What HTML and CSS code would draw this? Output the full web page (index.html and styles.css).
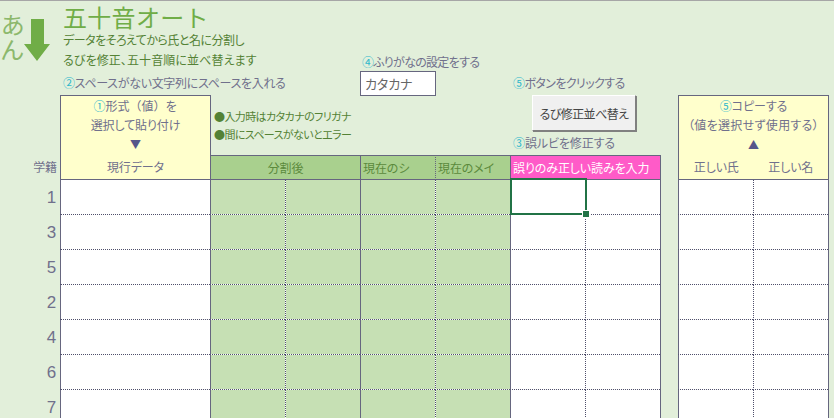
FILE: index.html
```html
<!DOCTYPE html>
<html lang="ja">

<head>
    <meta charset="UTF-8">
    <meta name="viewport" content="width=device-width, initial-scale=1.0">
    <title>五十音オート</title>
    <link rel="stylesheet" href="styles.css">
</head>

<body>
    <!-- 上の説明エリアと見出し -->
    <div class="top">
        <div class="intro">
            <div class="logo">
                <div class="kana">あ<br>ん</div>
                <svg class="arrow" width="26" height="42" viewBox="0 0 26 42">
                    <path d="M7 0H20V25H26L13 42L0 25H7Z" fill="#70ad47" />
                </svg>
            </div>
            <div class="intro_text">
                <div class="title">五十音オート</div>
                <div class="desc desc_kana">データをそろえてから氏と名に分割し</div>
                <div class="desc">るびを修正、五十音順に並べ替えます</div>
            </div>
        </div>
        <div class="step2 note"><span class="num">②</span>スペースがない文字列にスペースを入れる</div>

        <div class="furigana">
            <div class="note"><span class="num">④</span>ふりがなの設定をする</div>
            <div class="select_box">カタカナ</div>
        </div>

        <div class="actions">
            <div class="note"><span class="num">⑤</span>ボタンをクリックする</div>
            <button class="sort_btn">るび修正並べ替え</button>
            <div class="note note_last"><span class="num">③</span>誤ルビを修正する</div>
        </div>

        <div class="paste_head">
            <div class="head_line full"><span class="num">①</span>形式（値）を</div>
            <div class="head_line">選択して貼り付け</div>
            <div class="tri">▼</div>
            <div class="head_name">現行データ</div>
        </div>

        <div class="bullets">
            <div><span class="dot">●</span>入力時はカタカナのフリガナ</div>
            <div><span class="dot">●</span>間にスペースがないとエラー</div>
        </div>

        <div class="copy_head">
            <div class="head_line"><span class="num">⑤</span>コピーする</div>
            <div class="head_line spaced">（値を選択せず使用する）</div>
            <div class="tri">▲</div>
            <div class="copy_names"><span>正しい氏</span><span>正しい名</span></div>
        </div>

        <div class="gakuseki">学籍</div>
        <div class="green_head split">分割後</div>
        <div class="green_head now">現在のシ</div>
        <div class="green_head now2">現在のメイ</div>
        <div class="pink_head">誤りのみ正しい読みを入力</div>
    </div>

    <!-- データ行 -->
    <div class="rows">
        <div class="no">1</div>
        <div class="cell solid"></div>
        <div class="cell solid green"></div><div class="cell green"></div>
        <div class="cell solid green"></div><div class="cell green"></div>
        <div class="cell solid active"><i class="selected"><i class="handle"></i></i></div><div class="cell"></div>
        <div class="gap"></div>
        <div class="cell solid"></div><div class="cell"></div>
        <div class="gap"></div>

        <div class="no">3</div>
        <div class="cell solid"></div>
        <div class="cell solid green"></div><div class="cell green"></div>
        <div class="cell solid green"></div><div class="cell green"></div>
        <div class="cell solid"></div><div class="cell"></div>
        <div class="gap"></div>
        <div class="cell solid"></div><div class="cell"></div>
        <div class="gap"></div>

        <div class="no">5</div>
        <div class="cell solid"></div>
        <div class="cell solid green"></div><div class="cell green"></div>
        <div class="cell solid green"></div><div class="cell green"></div>
        <div class="cell solid"></div><div class="cell"></div>
        <div class="gap"></div>
        <div class="cell solid"></div><div class="cell"></div>
        <div class="gap"></div>

        <div class="no">2</div>
        <div class="cell solid"></div>
        <div class="cell solid green"></div><div class="cell green"></div>
        <div class="cell solid green"></div><div class="cell green"></div>
        <div class="cell solid"></div><div class="cell"></div>
        <div class="gap"></div>
        <div class="cell solid"></div><div class="cell"></div>
        <div class="gap"></div>

        <div class="no">4</div>
        <div class="cell solid"></div>
        <div class="cell solid green"></div><div class="cell green"></div>
        <div class="cell solid green"></div><div class="cell green"></div>
        <div class="cell solid"></div><div class="cell"></div>
        <div class="gap"></div>
        <div class="cell solid"></div><div class="cell"></div>
        <div class="gap"></div>

        <div class="no">6</div>
        <div class="cell solid"></div>
        <div class="cell solid green"></div><div class="cell green"></div>
        <div class="cell solid green"></div><div class="cell green"></div>
        <div class="cell solid"></div><div class="cell"></div>
        <div class="gap"></div>
        <div class="cell solid"></div><div class="cell"></div>
        <div class="gap"></div>

        <div class="no">7</div>
        <div class="cell solid"></div>
        <div class="cell solid green"></div><div class="cell green"></div>
        <div class="cell solid green"></div><div class="cell green"></div>
        <div class="cell solid"></div><div class="cell"></div>
        <div class="gap"></div>
        <div class="cell solid"></div><div class="cell"></div>
        <div class="gap"></div>
    </div>
</body>

</html>
```

FILE: styles.css
```css
html,
body {
    margin: 0;
    height: 418px;
    overflow: hidden;
}

body {
    background-color: #e2efda;
    border-top: 1px solid #a6a6a6;
    box-sizing: border-box;
    font-family: "Noto Sans CJK JP", "Noto Sans", sans-serif;
    font-feature-settings: "palt";
    font-size: 12px;
    letter-spacing: -0.1px;
    color: #70708c;
}

.top,
.rows {
    display: grid;
    grid-template-columns: 60px 150px repeat(6, 75px) 18px 75px 75px 1fr;
}

.top {
    grid-template-rows: 74px 20px 60px 25px;
}

.rows {
    grid-auto-rows: 35px;
}

/* タイトル */
.intro {
    grid-column: 1 / 5;
    grid-row: 1;
    display: flex;
    color: #548235;
}

.logo {
    width: 63px;
    display: flex;
    flex-shrink: 0;
    padding: 12px 0 0 1px;
    box-sizing: border-box;
}

.kana {
    width: 23px;
    font-family: "Liberation Sans", "Noto Sans CJK JP", sans-serif;
    font-size: 24px;
    line-height: 25px;
    color: #8cb86c;
}

.arrow {
    margin-top: 6px;
}

.intro_text {
    padding-top: 4px;
}

.title {
    font-family: "Liberation Sans", "Noto Sans CJK JP", sans-serif;
    font-size: 24px;
    line-height: 28px;
    letter-spacing: 0.3px;
    color: #70ad47;
    font-feature-settings: normal;
}

.desc {
    font-size: 12px;
    line-height: 20px;
    letter-spacing: 0.1px;
    white-space: nowrap;
}

.desc_kana {
    margin-top: -3px;
    letter-spacing: -0.5px;
}

.note {
    line-height: 18px;
    letter-spacing: -0.3px;
    white-space: nowrap;
}

.num {
    color: #2fb8cc;
}

.step2 {
    grid-column: 2 / 6;
    grid-row: 2;
    margin: -1px 0 0 3px;
}

.furigana {
    grid-column: 5 / 7;
    grid-row: 1 / 3;
    padding-top: 52px;
    margin-bottom: -1px;
}

.furigana .note {
    margin-left: 2px;
    letter-spacing: -0.7px;
}

.select_box {
    width: 76px;
    height: 25px;
    box-sizing: border-box;
    border: 1px solid #66667f;
    background-color: #fff;
    padding-left: 4px;
    font-size: 13px;
    line-height: 23px;
    color: #666;
}

.actions {
    grid-column: 7 / 10;
    grid-row: 1 / 4;
    padding-top: 73px;
    display: flex;
    flex-direction: column;
    align-items: flex-start;
}

.actions .note {
    margin-left: 3px;
    letter-spacing: -0.6px;
}

.actions .note_last {
    margin-top: 1px;
    letter-spacing: -0.1px;
}

.sort_btn {
    width: 104px;
    height: 36px;
    margin: 3px 0 2px 22px;
    padding: 0;
    border: 1px solid;
    border-color: #fff #808080 #808080 #fff;
    box-shadow: 1px 1px 0 #808080;
    background-color: #f0f0f0;
    font-family: inherit;
    font-feature-settings: inherit;
    font-size: 12px;
    letter-spacing: -0.6px;
    color: #444;
}

/* 黄色の見出し */
.paste_head,
.copy_head {
    grid-row: 3 / 5;
    background-color: #ffffcc;
    border: 1px solid #66667f;
    text-align: center;
    box-sizing: border-box;
    display: flex;
    flex-direction: column;
}

.paste_head {
    grid-column: 2;
    margin-right: -1px;
}

.copy_head {
    grid-column: 10 / 12;
    margin-right: -1px;
}

.head_line {
    height: 19px;
    line-height: 19px;
}

.full {
    font-feature-settings: normal;
    letter-spacing: 0;
}

.spaced {
    letter-spacing: 0.3px;
}

.tri {
    height: 21px;
    line-height: 21px;
    font-size: 11px;
    color: #56568a;
}

.head_name {
    line-height: 24px;
}

.copy_names {
    display: flex;
}

.copy_names span {
    width: 75px;
    line-height: 24px;
}

.bullets {
    grid-column: 3 / 5;
    grid-row: 3;
    padding: 12px 0 0 4px;
    line-height: 18px;
    font-size: 11px;
    letter-spacing: -0.6px;
    color: #548235;
    white-space: nowrap;
}

.gakuseki {
    grid-column: 1;
    grid-row: 4;
    text-align: right;
    padding-right: 3px;
    line-height: 24px;
}

.green_head,
.pink_head {
    grid-row: 4;
    box-sizing: border-box;
    border-top: 1px solid #66667f;
    border-bottom: 1px solid #66667f;
    line-height: 23px;
    white-space: nowrap;
}

.green_head {
    background-color: #a9d08e;
    color: #5b8a3c;
}

.split {
    grid-column: 3 / 5;
    text-align: center;
    margin-left: 1px;
}

.now {
    grid-column: 5;
    border-left: 1px solid #66667f;
    padding-left: 2px;
}

.now2 {
    grid-column: 6;
    border-left: 1px dotted #66667f;
    padding-left: 2px;
}

.pink_head {
    grid-column: 7 / 9;
    background-color: #ff5bc8;
    color: #fff;
    border: 1px solid #66667f;
    padding-left: 2px;
    margin-right: -1px;
}

/* データ行 */
.no {
    text-align: right;
    padding-right: 4px;
    font-family: "Liberation Sans", sans-serif;
    font-size: 17px;
    line-height: 36px;
}

.cell {
    position: relative;
    background-color: #fff;
    border-left: 1px dotted #4f4f6b;
    border-bottom: 1px dotted #4f4f6b;
}

.green {
    background: linear-gradient(#c6e0b4, #c6e0b4) padding-box, #fff;
}

.solid,
.gap {
    border-left: 1px solid #66667f;
}

.active {
    z-index: 1;
}

.selected {
    position: absolute;
    left: -1px;
    top: -2px;
    right: -2px;
    bottom: -1px;
    border: 2px solid #217346;
}

.handle {
    position: absolute;
    right: -5px;
    bottom: -5px;
    width: 6px;
    height: 6px;
    background-color: #217346;
    border: 1px solid #fff;
}
```
